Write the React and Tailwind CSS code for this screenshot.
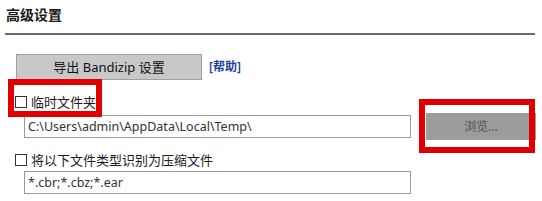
import React from 'react';

const font = { fontFamily: '"Noto Sans", "Noto Sans CJK SC", sans-serif' };

export default function App() {
  return (
    <div className="relative w-[542px] h-[201px] bg-white overflow-hidden text-[13px] text-[#1a1a1a]" style={font}>
      <div className="pl-[6px] pt-[5px] h-[28px] font-bold text-[14px] leading-[20px]">高级设置</div>
      <div className="ml-[5px] mt-[5px] w-[530px] h-[2px] bg-[#6a6a6a]" />

      <div className="flex items-center mt-[19px] ml-[16px] gap-[7px]">
        <button className="w-[186px] h-[26px] bg-[#c8c8c8] border border-[#a0a0a0] text-[13px] leading-none text-[#111]">
          导出 Bandizip 设置
        </button>
        <a className="text-[12px] text-[#1f3fa0] font-semibold">[帮助]</a>
      </div>

      <label className="flex items-center mt-[16px] ml-[15px] h-[12px] gap-[4px]">
        <span className="w-[12px] h-[12px] border border-[#333] bg-white" />
        <span className="leading-none">临时文件夹</span>
      </label>

      <div className="flex items-center mt-[5px] ml-[24px]">
        <div className="w-[387px] h-[23px] border border-[#9a9a9a] bg-white px-[3px] leading-[21px] text-[12.5px] text-[#333]">
          C:\Users\admin\AppData\Local\Temp\
        </div>
        <button className="ml-[15px] w-[110px] h-[27px] bg-[#9c9c9c] text-[12px] text-[#505050] leading-none">
          浏览...
        </button>
      </div>

      <label className="flex items-center mt-[14px] ml-[15px] h-[12px] gap-[4px]">
        <span className="w-[12px] h-[12px] border border-[#333] bg-white" />
        <span className="leading-none">将以下文件类型识别为压缩文件</span>
      </label>

      <div className="mt-[5px] ml-[24px] w-[387px] h-[23px] border border-[#9a9a9a] bg-white px-[3px] leading-[21px] text-[12.5px] text-[#333]">
        *.cbr;*.cbz;*.ear
      </div>

      <div className="absolute left-[8px] top-[79px] w-[94px] h-[38px] border-[6px] border-[#e10000]" />
      <div className="absolute left-[419px] top-[99px] w-[116px] h-[54px] border-[6px] border-[#e10000]" />
    </div>
  );
}
